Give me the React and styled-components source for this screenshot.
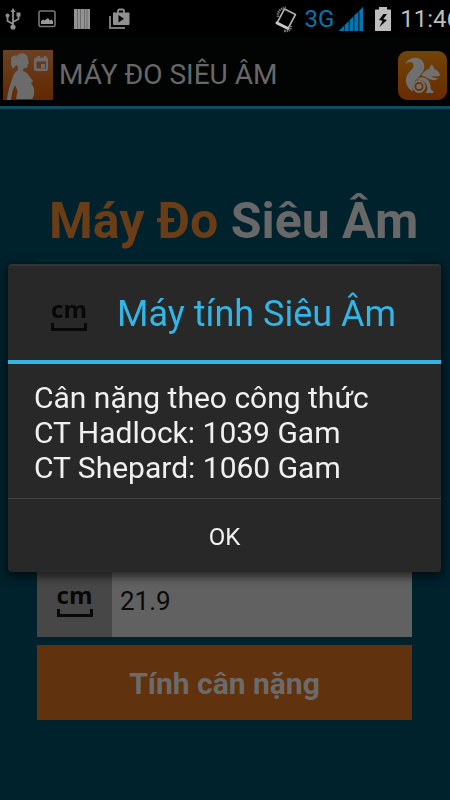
import React, { useState } from 'react';
import styled, { createGlobalStyle } from 'styled-components';

const GlobalStyle = createGlobalStyle`
  *, *::after {
    box-sizing: border-box;
  }
  body {
    margin: 0;
    background: #00222d;
    font-family: Roboto, sans-serif;
    overflow: hidden;
  }
`;

const Screen = styled.div`
  min-height: 100vh;
  display: flex;
  flex-direction: column;
`;

const StatusBar = styled.div`
  display: flex;
  justify-content: space-between;
  align-items: center;
  height: 38px;
  padding-left: 4px;
  background: #000;
  color: #bdbdbd;
  overflow: hidden;
`;

const Notifications = styled.div`
  display: flex;
  align-items: center;
  gap: 16px;
  color: #8f8f8f;
`;

// the clock runs off the right edge of the screen
const SystemIcons = styled.div`
  display: flex;
  align-items: center;
  flex-shrink: 0;
  margin-right: -10px;
`;

const Network = styled.span`
  margin: 0 4px 0 6px;
  font-size: 24px;
  line-height: 38px;
  color: #0077b0;
`;

const Power = styled.span`
  display: flex;
  margin: 0 8px 0 10px;
`;

const Clock = styled.time`
  font-size: 24px;
  line-height: 38px;
`;

const ActionBar = styled.header`
  display: flex;
  align-items: center;
  height: 71px;
  padding: 6px 3px 0;
  gap: 6px;
  background: #020404;
  border-bottom: 3px solid #124a5e;
`;

const AppName = styled.h1`
  flex: 1;
  margin: 0;
  font-size: 28px;
  font-weight: 400;
  line-height: 36px;
  white-space: nowrap;
  color: #686868;
`;

const Page = styled.main`
  flex: 1;
  display: flex;
  flex-direction: column;
  padding: 80px 38px 80px 37px;
`;

const Heading = styled.h2`
  margin: 0;
  padding: 0 0 7px 12px;
  font-size: 50px;
  font-weight: 700;
  line-height: 64px;
  white-space: nowrap;
  color: #686868;
  border-bottom: 1px solid #043240;
`;

const Accent = styled.span`
  color: #6a3d16;
`;

const Form = styled.form`
  display: flex;
  flex-direction: column;
  gap: 8px;
  margin-top: 301px;
`;

const Field = styled.div`
  display: flex;
  height: 75px;
`;

const FieldLabel = styled.label`
  display: flex;
  align-items: center;
  justify-content: center;
  width: 75px;
  background: #474747;
`;

const FieldInput = styled.input`
  flex: 1;
  min-width: 0;
  padding: 2px 8px 0;
  border: 0;
  outline: 0;
  font: 400 26px Roboto, sans-serif;
  color: #0a0a0a;
  background: #616161;
`;

const SubmitButton = styled.button`
  height: 75px;
  padding: 2px 0 0;
  border: 0;
  font: 700 30px Roboto, sans-serif;
  color: #6b6b6b;
  background: #60320d;
`;

const Unit = styled.span`
  display: flex;
  flex-direction: column;
  align-items: center;
  gap: 2px;
  width: 36px;
  font: 700 24px 'Open Sans', sans-serif;
  line-height: 24px;
  color: #080808;

  &::after {
    content: '';
    width: 36px;
    height: 8px;
    border: solid #080808;
    border-width: 0 3px 3px;
  }
`;

const Overlay = styled.div`
  position: fixed;
  inset: 38px 0 0;
  display: flex;
  align-items: center;
  justify-content: center;
  padding: 0 9px 2px 8px;
`;

const Dialog = styled.section`
  width: 100%;
  border-radius: 4px;
  background: #282828;
  border-top: 2px solid #333;
  box-shadow: 0 3px 10px 2px rgba(0, 0, 0, 0.6);
`;

const DialogHeader = styled.div`
  display: flex;
  align-items: center;
  gap: 30px;
  height: 98px;
  padding: 2px 43px 0;
  border-bottom: 4px solid #33b5e5;
`;

const DialogTitle = styled.h2`
  margin: 0;
  font-size: 36px;
  font-weight: 400;
  line-height: 44px;
  white-space: nowrap;
  color: #33b5e5;
`;

const DialogBody = styled.div`
  padding: 16px 26px 13px;
  font-size: 30px;
  line-height: 35px;
  color: #f0f0f0;

  p {
    margin: 0;
  }
`;

const DialogButton = styled.button`
  display: block;
  width: 100%;
  height: 74px;
  padding: 2px 0 0;
  border: 0;
  border-top: 1px solid #444;
  font: 400 24px Roboto, sans-serif;
  color: #f0f0f0;
  background: transparent;
`;

const UsbIcon = () => (
  <svg width="18" height="24" viewBox="0 0 18 24" fill="none" stroke="currentColor" strokeWidth="1.8">
    <path d="M9 3v17M9 17l-5.500-3V9M9 15l5.500-3V8" />
    <path d="M9 1l2.500 4h-5z" fill="currentColor" stroke="none" />
    <circle cx="9" cy="20" r="2.600" fill="currentColor" stroke="none" />
    <circle cx="3.500" cy="8.500" r="2" fill="currentColor" stroke="none" />
    <path d="M12.500 5.500h4v4h-4z" fill="currentColor" stroke="none" />
  </svg>
);

const ImageIcon = () => (
  <svg width="18" height="18" viewBox="0 0 18 18">
    <rect x="1" y="1" width="16" height="15.500" rx="1.500" fill="none" stroke="#777" strokeWidth="1.600" />
    <path d="M3 14v-3l2-1.500 1.500 1L10 8l2 2.500 1.500-1L15 11v3z" fill="#999" />
  </svg>
);

const BarsIcon = () => (
  <svg width="20" height="20" viewBox="0 0 20 20">
    <path d="M2 0h16v20H2z" fill="#6c6c6c" />
    <path d="M2 0h3v20H2zM6 0h2v20H6zM9 0h3v20H9zM13 0h1.500v20H13zM15.500 0H18v20h-2.500z" fill="#939393" />
  </svg>
);

const StoreIcon = () => (
  <svg width="22" height="22" viewBox="0 0 22 22">
    <path d="M2 8v12h15" fill="none" stroke="#777" strokeWidth="2" />
    <path d="M10 5V3q0-1.500 1.500-1.500h3q1.500 0 1.500 1.500v2" fill="none" stroke="#909090" strokeWidth="1.800" />
    <path d="M5 4.500h16.500V16q0 1-1 1H6q-1 0-1-1z" fill="#909090" />
    <path d="M10.500 7v7.500l5.500-3.700z" fill="#000" />
  </svg>
);

const RotateIcon = () => (
  <svg width="24" height="28" viewBox="0 0 24 28" fill="none">
    <path d="M10.500 4l11 5.500-7.500 14L3 18z" stroke="#b0b0b0" strokeWidth="1.600" strokeLinejoin="round" />
    <path d="M3 18l11 5.500" stroke="#c8c8c8" strokeWidth="3" strokeLinecap="round" />
    <path d="M4 12q-1-8 8-9.500M10 26q7 .5 7-5" stroke="#777" strokeWidth="2.400" strokeDasharray="1.500 .7" />
  </svg>
);

const SignalIcon = () => (
  <svg width="26" height="26" viewBox="0 0 26 26">
    <path d="M0 25l25-24v24z" fill="#00344d" />
    <path d="M1 25l5-5v5zM7 25v-6l3.500-3.400V25zM12 25V14l3-3v14zM16.500 25V9.500L20 6.200V25zM21.500 25V4.500L25 1v24z" fill="#0077b0" />
  </svg>
);

const BatteryIcon = () => (
  <svg width="18" height="26" viewBox="0 0 18 26">
    <path d="M5 1h8v2.500h3.500q.5 0 .5.500v20.500q0 .5-.5.500h-15q-.5 0-.5-.5V4q0-.5.5-.5H5z" fill="#bdbdbd" />
    <path d="M9.500 8L5 14l3.500.8L5.500 21l7.500-7-3.700-1L13 8z" fill="#000" />
  </svg>
);

const PregnancyLogo = () => (
  <svg width="50" height="50" viewBox="0 0 50 50" role="img" aria-label="Máy đo siêu âm">
    <defs>
      <linearGradient id="logo" x1="0" y1="0" x2="0" y2="1">
        <stop offset="0" stopColor="#6c4022" />
        <stop offset="1" stopColor="#612900" />
      </linearGradient>
    </defs>
    <path d="M0 0h50v50H0z" fill="url(#logo)" />
    <g fill="#6b6b6b">
      <path d="M16 4c4-2 9 0 9 5 0 2 .8 3 1 4.200l-1.200.8c.2 3-1 4.500-4 4.200l-1 2.800c4 1 6 4 8 7.500 1.500 1 2.200 2 2 3.500l-2 .8c3 3.500 4.200 7.500 3.200 12.200l-1.800 4H13l1.500-8-2.500-6-2.500 6L8 50H4c.5-8 3-15 5.500-22 1-4 3-6.500 5.500-8l-.5-4c-2-1-2.500-3-2-5C12 8 13.500 5.500 16 4z" />
      <path d="M13.500 5.500C9 5 7 8 8.500 11c-1.500 3 .5 5 1 8 2.500-1.500 5-5 3.500-8z" />
      <path d="M31 9.500q0-2 2-2h1.500V6H37v1.500h4V6h2.500v1.500q1.500 0 1.500 2V19q0 2-2 2H33q-2 0-2-2z" />
    </g>
    <path d="M33.500 11.500h9.500v7h-9.500z" fill="#66371a" />
    <path d="M38 14h4v4h-4z" fill="#6b6b6b" />
  </svg>
);

const SquirrelLogo = () => (
  <svg width="49" height="49" viewBox="0 0 49 49" role="img" aria-label="UC Browser">
    <defs>
      <linearGradient id="squirrel" x1="0" y1="0" x2="0" y2="1">
        <stop offset="0" stopColor="#704408" />
        <stop offset="1" stopColor="#682b00" />
      </linearGradient>
    </defs>
    <rect width="49" height="49" rx="9" fill="url(#squirrel)" />
    <g fill="#707070">
      <path d="M7 13C11 6 21 4.500 25 11c3 5 .5 10-3.500 14-4 3.800-8 8-6.500 15.500C8 37 5.500 28 10.500 22c3-3.500 6.500-6 4.500-9.500-1.500-2.500-5-1.500-8 .5z" />
      <path d="M23 24.500c2-3.500 5-5.500 8.500-7 0-1.500 1-3 2.500-4l2.500 4.500c3 1.500 5.500 3.500 5.500 6.500-2.500 1.500-6 1-9 .2 2 2 5 3 8 2.300-2.500 2.500-6.500 2.800-10 1-2.500-1.500-5-3-8-3.500z" />
      <path d="M17.500 28.500c6-4.500 13-1.500 14.500 4 .8 3 .2 4.500 1.500 6.500l2 1.500v1.500h-8c2.500-3 2.200-6.500.5-9-2-3.500-6-5-10.500-4.500z" />
    </g>
    <circle cx="21" cy="35.500" r="5.500" fill="#6b3300" stroke="#707070" strokeWidth="2" />
    <circle cx="21" cy="35.500" r="2.700" fill="#707070" />
  </svg>
);

const results = [
  { name: 'CT Hadlock', grams: 1039 },
  { name: 'CT Shepard', grams: 1060 },
];

const ResultDialog = ({ onClose }) => (
  <Overlay>
    <Dialog role="dialog" aria-labelledby="dialog-title">
      <DialogHeader>
        <Unit>cm</Unit>
        <DialogTitle id="dialog-title">Máy tính Siêu Âm</DialogTitle>
      </DialogHeader>
      <DialogBody>
        <p>Cân nặng theo công thức</p>
        {results.map(({ name, grams }) => (
          <p key={name}>{`${name}: ${grams} Gam`}</p>
        ))}
      </DialogBody>
      <DialogButton type="button" onClick={onClose}>OK</DialogButton>
    </Dialog>
  </Overlay>
);

const App = () => {
  const [length, setLength] = useState('21.9');
  const [open, setOpen] = useState(true);

  const handleSubmit = e => {
    e.preventDefault();
    setOpen(true);
  };

  return (
    <Screen>
      <GlobalStyle />
      <StatusBar>
        <Notifications>
          <UsbIcon />
          <ImageIcon />
          <BarsIcon />
          <StoreIcon />
        </Notifications>
        <SystemIcons>
          <RotateIcon />
          <Network>3G</Network>
          <SignalIcon />
          <Power><BatteryIcon /></Power>
          <Clock>11:46</Clock>
        </SystemIcons>
      </StatusBar>
      <ActionBar>
        <PregnancyLogo />
        <AppName>MÁY ĐO SIÊU ÂM</AppName>
        <SquirrelLogo />
      </ActionBar>
      <Page>
        <Heading><Accent>Máy Đo</Accent> Siêu Âm</Heading>
        <Form onSubmit={handleSubmit}>
          <Field>
            <FieldLabel htmlFor="length"><Unit>cm</Unit></FieldLabel>
            <FieldInput id="length" value={length} onChange={e => setLength(e.target.value)} />
          </Field>
          <SubmitButton type="submit">Tính cân nặng</SubmitButton>
        </Form>
      </Page>
      {open && <ResultDialog onClose={() => setOpen(false)} />}
    </Screen>
  );
};

export default App;
